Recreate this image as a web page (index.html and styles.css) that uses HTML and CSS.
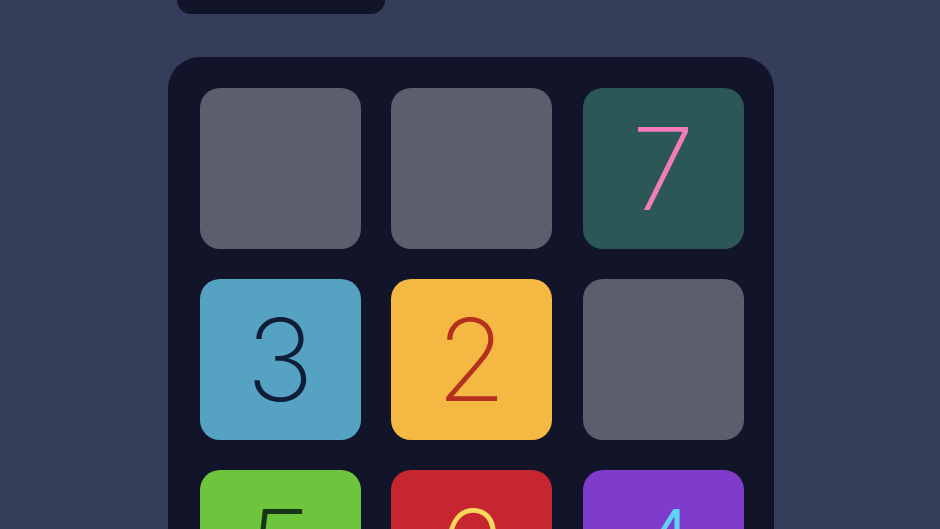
FILE: index.html
```html
<!DOCTYPE html>
<html lang="en">
<head>
    <meta charset="UTF-8">
    <meta name="viewport" content="width=device-width, initial-scale=1.0">
    <title>Number Puzzle</title>
    <link rel="stylesheet" href="styles.css">
</head>
<body>

    <div class="page">
        <div class="game">
            <!-- Score panel, scrolled mostly out of view -->
            <div class="score-box"></div>

            <div class="board">
                <div class="tile empty"></div>
                <div class="tile empty"></div>
                <div class="tile tile-7">7</div>
                <div class="tile tile-3">3</div>
                <div class="tile tile-2">2</div>
                <div class="tile empty"></div>
                <div class="tile tile-5">5</div>
                <div class="tile tile-6">6</div>
                <div class="tile tile-4">4</div>
            </div>
        </div>
    </div>

</body>
</html>
```

FILE: styles.css
```css
/* Page */
body {
    margin: 0;
    padding: 0;
    background-color: #343d5a;
    font-family: Inter, "Open Sans", sans-serif;
    overflow: hidden;
}

.page {
    margin-left: 60px;
    border-left: 1px solid #38425f;
    height: 529px;
}

.game {
    width: 606px;
    margin: 0 auto;
    position: relative;
    left: -30px;
}

/* Score panel */
.score-box {
    width: 208px;
    height: 14px;
    margin-left: 9px;
    background-color: #12152a;
    border-radius: 0 0 16px 16px;
}

/* Board */
.board {
    margin-top: 43px;
    padding: 31px 31px 31px 32px;
    background-color: #12152a;
    border-radius: 32px;
    display: grid;
    grid-template-columns: repeat(3, 161px);
    grid-auto-rows: 161px;
    column-gap: 30.5px;
    row-gap: 30px;
}

.tile {
    border-radius: 20px;
    display: flex;
    align-items: center;
    justify-content: center;
    font-size: 114px;
    font-weight: 200;
    line-height: 1;
}

.empty {
    background-color: #5a5e6d;
}

.tile-7 {
    background-color: #2b5856;
    color: #f27bb9;
}

.tile-3 {
    background-color: #56a2c3;
    color: #0f1d38;
}

.tile-2 {
    background-color: #f4b843;
    color: #b5301f;
}

.tile-5 {
    background-color: #6dc53e;
    color: #173514;
}

.tile-6 {
    background-color: #c6262f;
    color: #f8d75c;
}

.tile-4 {
    background-color: #7f3bcc;
    color: #5fd3f2;
}
```
